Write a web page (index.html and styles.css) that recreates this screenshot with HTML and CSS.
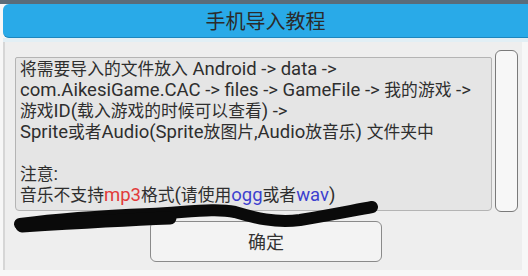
FILE: index.html
```html
<!DOCTYPE html>
<html lang="zh">
<head>
<meta charset="utf-8">
<title>手机导入教程</title>
<link rel="stylesheet" href="styles.css">
</head>
<body>
<div class="topstrip"></div>
<div class="titlebar">手机导入教程</div>
<div class="highlight"></div>
<div class="panel">
  <div class="content-row">
    <div class="textbox">
      <div class="line"><span class="zh">将需要导入的文件放入</span> Android -&gt; data -&gt;</div>
      <div class="line">com.AikesiGame.CAC -&gt; files -&gt; GameFile -&gt; <span class="zh">我的游戏</span> -&gt;</div>
      <div class="line"><span class="zh">游戏</span>ID(<span class="zh">载入游戏的时候可以查看</span>) -&gt;</div>
      <div class="line">Sprite<span class="zh">或者</span>Audio(Sprite<span class="zh">放图片</span>,Audio<span class="zh">放音乐</span>) <span class="zh">文件夹中</span></div>
      <div class="line">&nbsp;</div>
      <div class="line"><span class="zh">注意</span>:</div>
      <div class="line"><span class="zh">音乐不支持</span><span class="red">mp3</span><span class="zh">格式</span>(<span class="zh">请使用</span><span class="blue">ogg</span><span class="zh">或者</span><span class="blue">wav</span>)</div>
    </div>
    <div class="scrollbar"></div>
  </div>
  <div class="button-row">
    <div class="button">确定</div>
  </div>
</div>
<svg class="scribble" width="528" height="276" viewBox="0 0 528 276">
  <path d="M20 224 C 50 220, 100 216, 150 214 C 190 212, 215 208, 235 212 C 255 218, 275 223, 300 220 C 330 215, 355 210, 372 207" fill="none" stroke="#0a0a0a" stroke-width="12" stroke-linecap="round" stroke-linejoin="round"/>
  <path d="M22 226 C 70 223, 120 220, 170 218" fill="none" stroke="#0a0a0a" stroke-width="13" stroke-linecap="round"/>
</svg>
</body>
</html>
```
FILE: styles.css
```css
html, body {
  margin: 0;
  padding: 0;
}
body {
  width: 528px;
  height: 276px;
  overflow: hidden;
  background: #f7f7f7;
  font-family: Roboto, "Noto Sans CJK SC", sans-serif;
  color: #2e2e2e;
  position: relative;
}
.topstrip {
  height: 4px;
  background: #5a6c7a;
}
.titlebar {
  margin-left: 3px;
  height: 33px;
  background: #29aae8;
  border-bottom: 1px solid #1d86bd;
  border-radius: 6px 0 0 6px;
  font-family: "Noto Sans CJK SC", sans-serif;
  font-size: 20px;
  line-height: 34px;
  text-align: center;
  color: #2b2b2b;
}
.highlight {
  margin-left: 3px;
  height: 4px;
  background: #e2eff5;
}
.panel {
  margin-left: 3px;
  width: 517px;
  height: 228px;
  background: #eeeeee;
  border-left: 2px solid #d6d6d6;
  display: flex;
  flex-direction: column;
}
.content-row {
  display: flex;
  align-items: flex-start;
  padding-top: 8px;
  margin-left: 10px;
  gap: 3px;
}
.textbox {
  margin-top: 7px;
  width: 471px;
  height: 152px;
  background: #e5e5e5;
  border: 1px solid #b4b4b4;
  border-radius: 2px 2px 4px 4px;
  padding-left: 4px;
  font-size: 18.5px;
}
.line {
  white-space: nowrap;
  height: 21px;
  line-height: 21px;
}
.zh {
  font-family: "Noto Sans CJK SC", sans-serif;
  font-size: 16.8px;
}
.red {
  color: #e23a3a;
}
.blue {
  color: #3d3fcf;
}
.scrollbar {
  width: 21px;
  height: 160px;
  background: #f7f7f7;
  border: 1.5px solid #7a7a7a;
  border-radius: 6px;
}
.button-row {
  display: flex;
  padding-left: 145px;
  padding-top: 9px;
}
.button {
  width: 230px;
  height: 39px;
  background: #f3f3f3;
  border: 1px solid #8a8a8a;
  border-radius: 6px;
  font-family: "Noto Sans CJK SC", sans-serif;
  font-size: 18px;
  line-height: 39px;
  text-align: center;
  color: #333333;
}
.scribble {
  position: absolute;
  top: 0;
  left: 0;
  pointer-events: none;
}
```
